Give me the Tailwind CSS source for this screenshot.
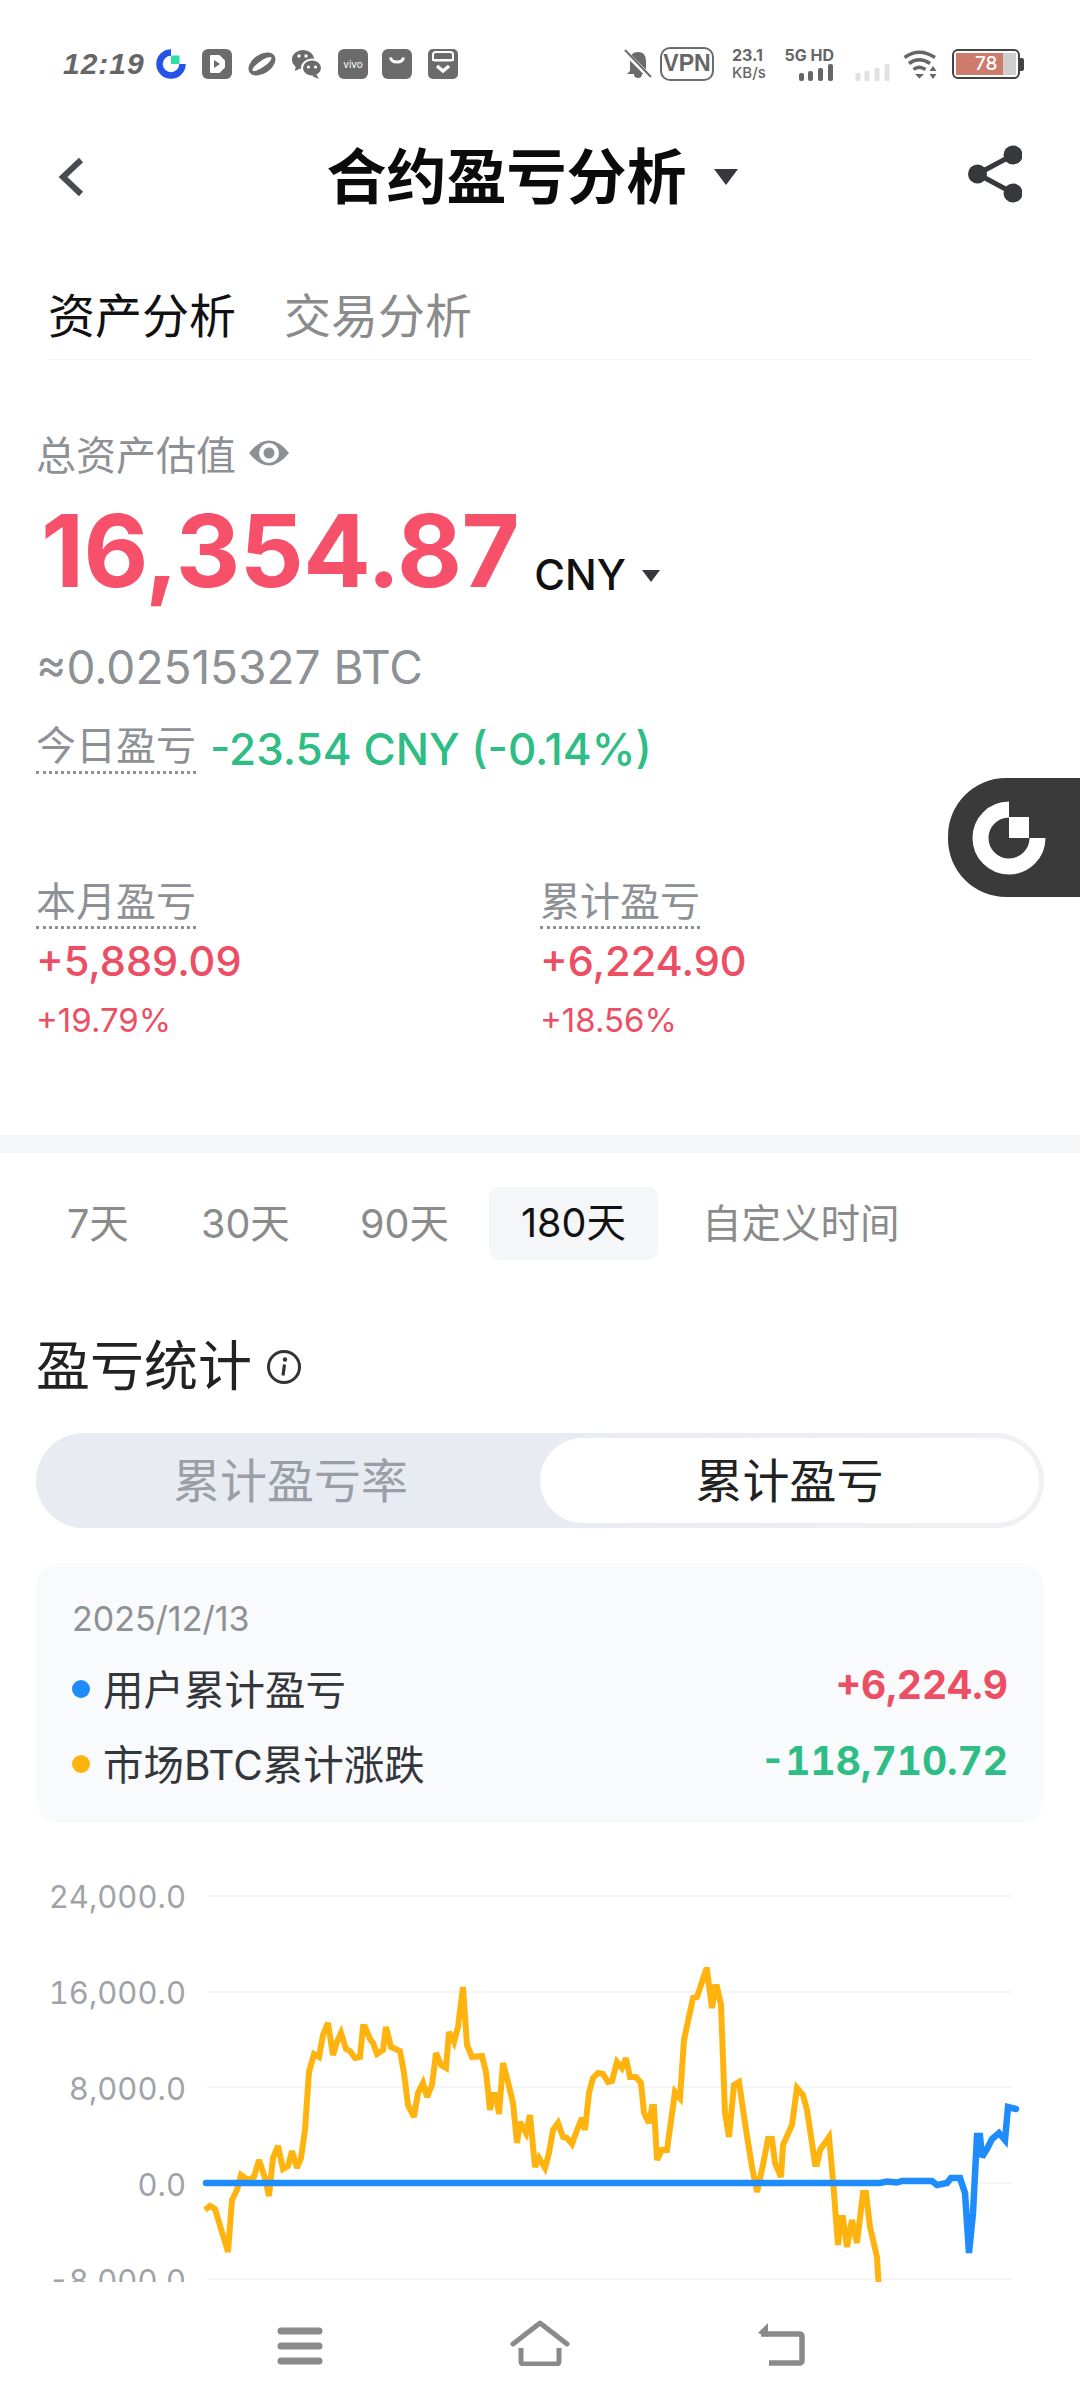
<!DOCTYPE html>
<html lang="zh">
<head>
<meta charset="utf-8">
<script src="https://cdn.jsdelivr.net/npm/@tailwindcss/browser@4"></script>
<title>合约盈亏分析</title>
</head>
<body class="bg-white">
<div class="relative w-[1080px] h-[2408px] overflow-hidden bg-white font-[Inter,'Noto_Sans_CJK_SC',sans-serif] text-[#111]">

  <!-- status bar -->
  <div class="h-[128px] flex items-center justify-between pl-[63px] pr-[56px] text-[#666]">
    <div class="flex items-center">
      <span class="w-[93px] text-[30px] leading-[30px] font-bold italic font-['Liberation_Sans',sans-serif] tracking-[1px]">12:19</span>
      <svg class="w-[30px] h-[30px]" viewBox="0 0 30 30"><path d="M15 3.500A11.500 11.500 0 1 0 26.500 15" fill="none" stroke="#2354e6" stroke-width="6.500"/><rect x="15" y="6.500" width="8.500" height="8.500" fill="#2ee0a6"/></svg>
      <svg class="w-[30px] h-[30px] ml-[16px]" viewBox="0 0 30 30"><rect width="30" height="30" rx="6" fill="#6b6b6b"/><path d="M9 7h8l5 5v6l-5 5H9z" fill="#fff" stroke="#fff" stroke-linejoin="round" stroke-width="2"/><path d="M12 11l6 4-6 4z" fill="#6b6b6b"/></svg>
      <svg class="w-[30px] h-[30px] ml-[15px]" viewBox="0 0 30 30"><ellipse cx="15" cy="15" rx="15" ry="9.500" transform="rotate(-35 15 15)" fill="#6b6b6b"/><ellipse cx="15" cy="15" rx="11.500" ry="3.200" transform="rotate(-35 15 15)" fill="#fff"/></svg>
      <svg class="w-[30px] h-[30px] ml-[15px]" viewBox="0 0 30 30"><ellipse cx="11" cy="10.500" rx="11" ry="9.500" fill="#6b6b6b"/><path d="M4 16l-1 6 6-3z" fill="#6b6b6b"/><ellipse cx="20" cy="19" rx="10" ry="8.500" fill="#6b6b6b" stroke="#fff" stroke-width="2"/><path d="M24 25l3 5-7-3z" fill="#6b6b6b"/><circle cx="7" cy="7" r="1.700" fill="#fff"/><circle cx="14" cy="7" r="1.700" fill="#fff"/><circle cx="16.500" cy="18" r="1.600" fill="#fff"/><circle cx="23.500" cy="18" r="1.600" fill="#fff"/></svg>
      <span class="w-[30px] h-[30px] ml-[16px] rounded-[6px] bg-[#6b6b6b] text-white text-[10px] leading-[30px] text-center">vivo</span>
      <svg class="w-[30px] h-[30px] ml-[14px]" viewBox="0 0 30 30"><rect width="30" height="30" rx="6" fill="#6b6b6b"/><path d="M8.500 8.500c1 6 12 6 13 0" fill="none" stroke="#fff" stroke-width="3"/></svg>
      <svg class="w-[30px] h-[30px] ml-[16px]" viewBox="0 0 30 30"><rect width="30" height="30" rx="5" fill="#6b6b6b"/><path d="M5 12V5.500Q5 3 8 3h14q3 0 3 2.500V12" fill="none" stroke="#fff" stroke-width="2"/><rect x="6" y="10" width="18" height="2.500" fill="#fff"/><path d="M9 17l6 5 6-5" fill="none" stroke="#fff" stroke-width="3.500"/></svg>
    </div>
    <div class="flex items-center">
      <svg class="w-[28px] h-[30px]" viewBox="0 0 28 30"><path d="M6 22V12q0-9 8-9t8 9v10l3 3H3z" fill="#6b6b6b"/><path d="M10 25a4 4 0 0 0 8 0z" fill="#6b6b6b"/><path d="M0 2l27 27" stroke="#fff" stroke-width="5"/><path d="M1 1l26 27" stroke="#6b6b6b" stroke-width="2"/></svg>
      <span class="w-[54px] h-[34px] ml-[8px] rounded-[10px] border-[2.5px] border-[#6b6b6b] text-[23px] leading-[29px] text-center font-bold font-['Liberation_Sans',sans-serif]">VPN</span>
      <span class="w-[38px] ml-[18px] flex flex-col items-start font-bold text-[16px] leading-[17px]"><span>23.1</span><span class="text-[15px] font-medium">KB/s</span></span>
      <span class="w-[48px] ml-[16px] flex flex-col items-end"><span class="text-[16px] leading-[17px] font-bold whitespace-nowrap">5G HD</span>
        <svg class="w-[35px] h-[17px]" viewBox="0 0 35 17"><g fill="#666"><rect x="0" y="9" width="5" height="8" rx="2"/><rect x="9" y="7" width="5" height="10" rx="2"/><rect x="19" y="4" width="5" height="13" rx="2"/><rect x="29" y="0" width="5" height="17" rx="2"/></g></svg></span>
      <svg class="w-[36px] h-[17px] ml-[21px] mt-[16px]" viewBox="0 0 35 17"><g fill="#e2e2e2"><rect x="0" y="9" width="5" height="8" rx="1"/><rect x="9" y="7" width="5" height="10" rx="1"/><rect x="19" y="4" width="5" height="13" rx="1"/><rect x="29" y="0" width="5" height="17" rx="1"/></g></svg>
      <svg class="w-[37px] h-[30px] ml-[12px]" viewBox="0 0 37 30"><g fill="none" stroke="#666" stroke-width="3.500"><path d="M1.500 8.500Q16-2 32 8.500"/><path d="M6 14.500Q16 7 27 14.500"/><path d="M10.500 20.500Q16 16 22.500 20.500"/></g><path d="M12 25h9l-4.500 4.500z" fill="#666"/><path d="M30 17l3.500 5h-7zM30 30l3.500-5h-7z" fill="#666"/></svg>
      <span class="relative w-[68px] h-[30px] ml-[12px] rounded-[6px] border-[2px] border-[#444] overflow-hidden">
        <span class="absolute left-[2px] top-[2px] bottom-[2px] w-[47px] bg-[#cd7b6d]"></span>
        <span class="absolute left-[49px] top-[2px] bottom-[2px] w-[13px] bg-[#cfcfcf]"></span>
        <span class="absolute left-[21px] top-0 text-white text-[19px] leading-[26px] font-medium">78</span>
      </span>
      <span class="w-[4px] h-[13px] bg-[#444] rounded-r-[2px]"></span>
    </div>
  </div>

  <!-- title bar -->
  <div class="relative h-[98px] flex items-center justify-center">
    <svg class="absolute left-[56px] top-[28px] w-[28px] h-[42px]" viewBox="0 0 28 42"><path d="M25 4L7 21l18 17" fill="none" stroke="#484a4f" stroke-width="6"/></svg>
    <span class="ml-[-16px] text-[60px] leading-[70px] font-bold text-[#0b0b0b]">合约盈亏分析</span>
    <svg class="w-[24px] h-[16px] ml-[27px]" viewBox="0 0 24 16"><path d="M0 0h24L12 16z" fill="#36383c"/></svg>
    <svg class="absolute left-[968px] top-[17px] w-[54px] h-[60px]" viewBox="0 0 54 60"><g fill="#36383c"><circle cx="45" cy="10" r="9.500"/><circle cx="9.500" cy="29" r="9.500"/><circle cx="45" cy="48" r="9.500"/></g><path d="M45 10L9.500 29 45 48" fill="none" stroke="#36383c" stroke-width="5"/></svg>
  </div>

  <!-- tabs -->
  <div class="ml-[48px] mr-[48px] h-[134px] pt-[60px] border-b border-[#f2f3f4] flex gap-[48px] text-[47px] leading-[60px]">
    <span class="text-[#111]">资产分析</span>
    <span class="text-[#8b8b8b]">交易分析</span>
  </div>

  <!-- assets -->
  <div class="px-[36px]">
    <div class="mt-[71px] flex items-center text-[40px] leading-[50px] text-[#8d9094]">
      <span>总资产估值</span>
      <svg class="w-[42px] h-[30px] ml-[12px] mt-[-6px]" viewBox="0 0 42 30"><path d="M1 15Q21-10 41 15 21 40 1 15z" fill="#8d9094"/><circle cx="21" cy="15" r="10" fill="#fff"/><circle cx="21" cy="15" r="5.500" fill="#8d9094"/></svg>
    </div>
    <div class="mt-[15px] ml-[5px] flex items-end h-[110px]">
      <span class="text-[100px] leading-[110px] font-bold text-[#f6506a] tracking-[-0.5px]">16,354.87</span>
      <span class="ml-[15px] mb-[6px] text-[42px] leading-[50px] font-medium text-[#111]">CNY</span>
      <svg class="w-[18px] h-[12px] ml-[16px] mb-[24px]" viewBox="0 0 18 12"><path d="M0 0h18L9 12z" fill="#36383c"/></svg>
    </div>
    <div class="mt-[33px] text-[46px] leading-[56px] text-[#8d9094]">≈0.02515327 BTC</div>
    <div class="mt-[26px] flex items-start text-[40px] leading-[50px]">
      <span class="text-[#8d9094] border-b-[3px] border-dotted border-[#8d9094]">今日盈亏</span>
      <span class="ml-[14px] mt-[3px] text-[44px] font-medium text-[#2ebd85]">-23.54 CNY (-0.14%)</span>
    </div>
    <div class="mt-[104px] grid grid-cols-[504px_1fr]">
      <div class="flex flex-col items-start">
        <span class="text-[40px] leading-[48px] text-[#8d9094] border-b-[3px] border-dotted border-[#8d9094]">本月盈亏</span>
        <span class="mt-[7px] text-[41.500px] leading-[50px] font-medium text-[#ec4e64]">+5,889.09</span>
        <span class="mt-[14px] text-[33px] leading-[40px] text-[#ec4e64]">+19.79%</span>
      </div>
      <div class="flex flex-col items-start">
        <span class="text-[40px] leading-[48px] text-[#8d9094] border-b-[3px] border-dotted border-[#8d9094]">累计盈亏</span>
        <span class="mt-[7px] text-[41.500px] leading-[50px] font-medium text-[#ec4e64]">+6,224.90</span>
        <span class="mt-[14px] text-[33px] leading-[40px] text-[#ec4e64]">+18.56%</span>
      </div>
    </div>
  </div>

  <!-- floating logo tab -->
  <div class="absolute left-[948px] top-[778px] w-[132px] h-[119px] bg-[#3a3a3a] rounded-l-[58px] flex items-center pl-[24px]">
    <svg class="w-[74px] h-[74px]" viewBox="0 0 74 74"><path d="M37 8.500A28.500 28.500 0 1 0 65.500 37" fill="none" stroke="#fff" stroke-width="16"/><rect x="37" y="16" width="20" height="21" fill="#fff"/></svg>
  </div>

  <!-- separator -->
  <div class="absolute left-0 right-0 top-[1135px] h-[18px] bg-[#f5f6f7]"></div>

  <!-- range -->
  <div class="absolute left-0 right-0 top-[1187px] h-[73px] flex items-center text-[39.500px] leading-[50px] text-[#8b8b8b]">
    <span class="ml-[67px] w-[134px]">7天</span>
    <span class="w-[159px]">30天</span>
    <span class="w-[129px]">90天</span>
    <span class="w-[169px] h-[73px] leading-[73px] rounded-[10px] bg-[#f5f6f7] text-center text-[#111]">180天</span>
    <span class="ml-[44px]">自定义时间</span>
  </div>

  <div class="absolute left-[36px] right-[36px] top-[1340px]">
    <div class="flex items-center h-[54px]">
      <span class="text-[54px] leading-[54px] text-[#222]">盈亏统计</span>
      <svg class="w-[36px] h-[36px] ml-[14px]" viewBox="0 0 36 36"><circle cx="18" cy="18" r="15.500" fill="none" stroke="#333" stroke-width="3"/><circle cx="19" cy="10.500" r="2.200" fill="#333"/><path d="M18.500 15.500l-1.500 11" stroke="#333" stroke-width="3.200"/></svg>
    </div>
    <!-- toggle -->
    <div class="mt-[39px] h-[95px] rounded-full bg-[linear-gradient(90deg,#e9ebf2_50%,#eff1f4_100%)] p-[5px] flex items-center">
      <span class="w-[499px] text-center text-[47px] leading-[60px] text-[#9a9ea6]">累计盈亏率</span>
      <span class="w-[499px] h-[85px] rounded-full bg-white text-center text-[47px] leading-[85px] text-[#222]">累计盈亏</span>
    </div>
    <!-- tooltip card -->
    <div class="mt-[35px] h-[260px] rounded-[24px] bg-[#f9fafb] px-[36px] pt-[34px]">
      <div class="text-[34px] leading-[44px] text-[#8d9094]">2025/12/13</div>
      <div class="mt-[20px] flex items-center justify-between h-[60px]">
        <span class="flex items-center text-[40.500px] text-[#33363b]"><i class="w-[18px] h-[18px] rounded-full bg-[#1e8cfa] mr-[13px] mt-[-4px]"></i>用户累计盈亏</span>
        <span class="text-[39px] font-bold tabular-nums text-[#ec4e64] mt-[-12px]">+6,224.9</span>
      </div>
      <div class="mt-[15px] flex items-center justify-between h-[60px]">
        <span class="flex items-center text-[40.500px] text-[#33363b]"><i class="w-[18px] h-[18px] rounded-full bg-[#ffb30f] mr-[13px] mt-[-4px]"></i>市场BTC累计涨跌</span>
        <span class="text-[39px] font-bold tabular-nums text-[#2ebd85] mt-[-10px]">-118,710.72</span>
      </div>
    </div>
  </div>

  <!-- chart -->
  <div class="absolute left-0 right-0 top-[1823px] h-[459px] overflow-hidden flex">
    <div class="w-[186px] pt-[26px] shrink-0 text-right text-[31px] tabular-nums text-[#a0a3a8]">
      <div class="h-[96px] leading-[96px]">24,000.0</div>
      <div class="h-[96px] leading-[96px]">16,000.0</div>
      <div class="h-[96px] leading-[96px]">8,000.0</div>
      <div class="h-[96px] leading-[96px]">0.0</div>
      <div class="h-[96px] leading-[96px]">-8,000.0</div>
    </div>
    <svg class="w-[894px] h-[459px]" viewBox="186 1823 894 459">
      <g stroke="#f4f5f6" stroke-width="2">
        <path d="M207 1896H1013M207 1992H1013M207 2087H1013M207 2183H1013M207 2279H1013"/>
      </g>
      <polyline fill="none" stroke="#ffb30f" stroke-width="6" stroke-linejoin="miter" stroke-miterlimit="3" points="205,2210 210,2206 215,2209 228,2252 232,2200 237,2190 241,2175 248,2180 254,2177 259,2160 265,2178 269,2196 273,2158 278,2146 283,2169 288,2166 292,2151 297,2168 301,2158 305,2130 309,2072 314,2054 319,2057 323,2035 328,2023 333,2055 337,2042 341,2033 346,2049 350,2051 355,2058 360,2057 363,2027 365,2027 370,2039 373,2043 377,2054 383,2050 386,2027 391,2047 400,2051 404,2073 408,2105 414,2117 418,2093 423,2083 427,2097 432,2085 436,2053 441,2065 446,2068 449,2032 454,2042 458,2027 463,1987 467,2045 472,2057 482,2056 486,2072 490,2110 493,2095 496,2095 499,2114 503,2063 508,2082 513,2103 517,2143 520,2122 526,2133 530,2115 535,2167 539,2158 545,2168 549,2153 553,2130 558,2123 563,2137 567,2138 572,2144 577,2130 582,2118 585,2130 589,2093 593,2078 598,2073 603,2074 608,2082 612,2081 617,2062 622,2068 626,2058 630,2077 636,2077 641,2083 644,2113 649,2123 652,2107 654,2107 657,2160 662,2150 667,2150 675,2092 680,2098 684,2040 693,1998 697,1997 706,1970 707,1970 712,2008 715,1987 717,1987 721,2005 725,2113 729,2137 734,2085 739,2082 745,2123 752,2167 757,2192 763,2165 768,2139 772,2139 775,2163 781,2177 783,2145 792,2125 797,2088 803,2095 807,2110 812,2143 815,2164 817,2164 820,2150 829,2137 833,2180 838,2245 841,2218 843,2218 847,2247 852,2220 857,2243 863,2193 866,2193 870,2227 877,2257 879,2290"/>
      <polyline fill="none" stroke="#1e8cfa" stroke-width="6.500" stroke-linecap="round" stroke-linejoin="miter" stroke-miterlimit="3" points="206,2183 880,2183 887,2181.500 897,2182.500 902,2181 932,2181 937,2185 947,2183 951,2178 960,2178 965,2193 969,2253 973,2213 977,2136 980,2136 982,2157 987,2149 992,2139 999,2133 1005,2140 1008,2107 1016,2109"/>
    </svg>
  </div>

  <!-- nav -->
  <div class="absolute left-0 right-0 bottom-0 h-[126px] bg-white">
    <svg class="absolute left-[276px] top-[44px] w-[48px] h-[40px]" viewBox="0 0 48 40"><g stroke="#8a8a8a" stroke-width="7" stroke-linecap="round"><path d="M5 5h38M5 20h38M5 35h38"/></g></svg>
    <svg class="absolute left-[510px] top-[38px] w-[60px] h-[46px]" viewBox="0 0 60 46"><path d="M3 24L30 3l27 21" fill="none" stroke="#8a8a8a" stroke-width="5" stroke-linecap="round" stroke-linejoin="round"/><path d="M11 28v13q0 3 3 3h32q3 0 3-3V28" fill="none" stroke="#8a8a8a" stroke-width="5"/></svg>
    <svg class="absolute left-[755px] top-[40px] w-[50px] h-[44px]" viewBox="0 0 50 44"><path d="M6 12h38q3 0 3 3v23q0 3-3 3H14" fill="none" stroke="#8a8a8a" stroke-width="5.500"/><path d="M3 11L13 1v14z" fill="#8a8a8a"/></svg>
  </div>
</div>
</body>
</html>
